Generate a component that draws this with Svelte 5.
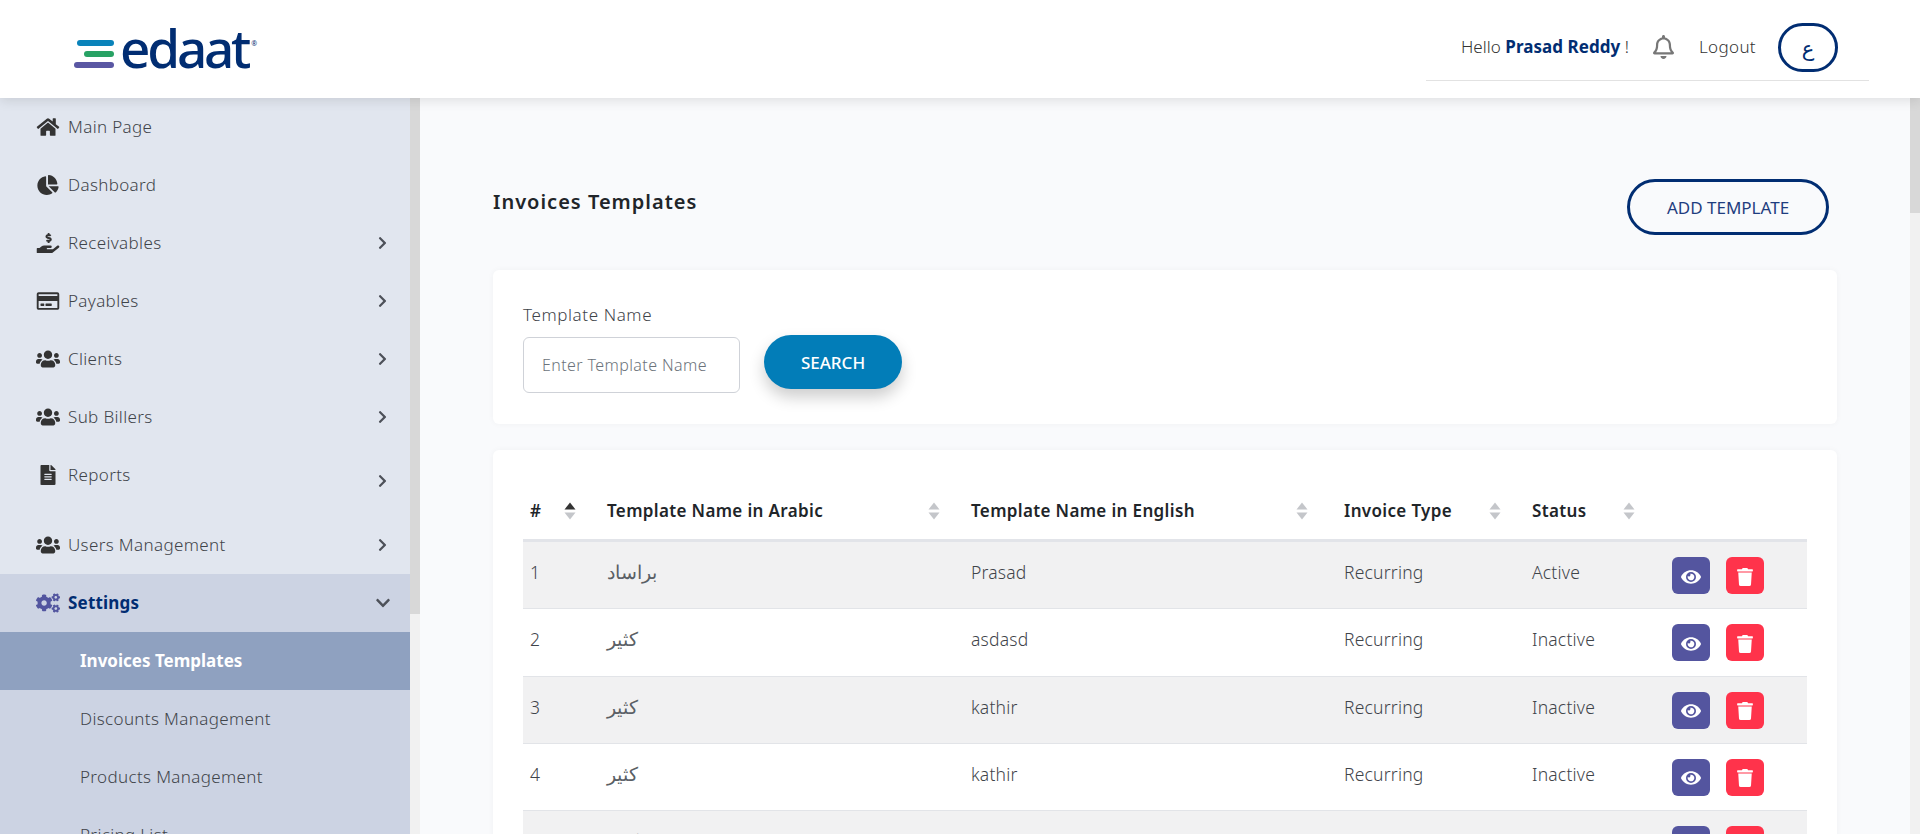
<script>
  const icons = {
    home: ['0 0 576 512', 'M280.37 148.26L96 300.11V464a16 16 0 0 0 16 16l112.06-.29a16 16 0 0 0 15.92-16V368a16 16 0 0 1 16-16h64a16 16 0 0 1 16 16v95.64a16 16 0 0 0 16 16.05L464 480a16 16 0 0 0 16-16V300L295.67 148.26a12.19 12.19 0 0 0-15.3 0zM571.6 251.47L488 182.56V44.05a12 12 0 0 0-12-12h-56a12 12 0 0 0-12 12v72.61L318.47 43a48 48 0 0 0-61 0L4.34 251.47a12 12 0 0 0-1.6 16.9l25.5 31A12 12 0 0 0 45.15 301l235.22-193.74a12.19 12.19 0 0 1 15.3 0L530.9 301a12 12 0 0 0 16.9-1.6l25.5-31a12 12 0 0 0-1.7-16.93z'],
    pie: ['0 0 544 512', 'M527.79 288H290.5l158.03 158.03c6.04 6.04 15.98 6.53 22.19.68 38.7-36.46 65.32-85.61 73.13-140.86 1.34-9.46-6.51-17.85-16.06-17.85zm-15.83-64.8C503.72 103.74 408.26 8.28 288.8.04 279.68-.59 272 7.1 272 16.24V240h223.77c9.14 0 16.82-7.68 16.19-16.8zM224 288V50.71c0-9.55-8.39-17.4-17.84-16.06C86.99 51.49-4.1 155.6.14 280.37 4.5 408.51 114.83 513.59 243.03 511.98c50.4-.63 96.97-16.87 135.26-44.03 7.9-5.6 8.42-17.23 1.57-24.08L224 288z'],
    hand: ['0 0 576 512', 'M271.06,144.3l54.27,14.3a8.59,8.59,0,0,1,6.63,8.1c0,4.6-4.09,8.4-9.12,8.4h-35.6a30,30,0,0,1-11.19-2.2c-5.24-2.2-11.28-1.7-15.3,2l-19,17.5a11.68,11.68,0,0,0-2.25,2.66,11.42,11.42,0,0,0,3.88,15.74,83.77,83.77,0,0,0,34.51,11.5V240c0,8.8,7.83,16,17.37,16h17.37c9.55,0,17.38-7.2,17.38-16V222.4c32.93-3.6,57.84-31,53.5-63-3.15-23-22.46-41.3-46.56-47.7L282.68,97.4a8.59,8.59,0,0,1-6.63-8.1c0-4.6,4.09-8.4,9.12-8.4h35.6A30,30,0,0,1,332,83.1c5.23,2.2,11.28,1.7,15.3-2l19-17.5A11.31,11.31,0,0,0,368.47,61a11.43,11.43,0,0,0-3.84-15.78,83.82,83.82,0,0,0-34.52-11.5V16c0-8.8-7.82-16-17.37-16H295.37C285.82,0,278,7.2,278,16V33.6c-32.89,3.6-57.85,31-53.51,63C227.63,119.6,247,137.9,271.06,144.3ZM565.27,328.1c-11.8-10.7-30.2-10-42.6,0L430.27,402a63.64,63.64,0,0,1-40,14H272a16,16,0,0,1,0-32h78.29c15.9,0,30.71-10.9,33.25-26.6a31.2,31.2,0,0,0,.46-5.46A32,32,0,0,0,352,320H192a117.66,117.66,0,0,0-74.1,26.29L71.4,384H16A16,16,0,0,0,0,400v96a16,16,0,0,0,16,16H372.77a64,64,0,0,0,40-14L564,377a32,32,0,0,0,1.28-48.9Z'],
    card: ['0 0 576 512', 'M527.9 32H48.1C21.5 32 0 53.5 0 80v352c0 26.5 21.5 48 48.1 48h479.8c26.6 0 48.1-21.5 48.1-48V80c0-26.5-21.5-48-48.1-48zM54.1 80h467.8c3.3 0 6 2.7 6 6v42H48.1V86c0-3.3 2.7-6 6-6zm467.8 352H54.1c-3.3 0-6-2.7-6-6V256h479.8v170c0 3.3-2.7 6-6 6zM192 332v40c0 6.6-5.4 12-12 12h-72c-6.6 0-12-5.4-12-12v-40c0-6.6 5.4-12 12-12h72c6.6 0 12 5.4 12 12zm192 0v40c0 6.6-5.4 12-12 12H236c-6.6 0-12-5.4-12-12v-40c0-6.6 5.4-12 12-12h136c6.6 0 12 5.4 12 12z'],
    users: ['0 0 640 512', 'M96 224c35.3 0 64-28.7 64-64s-28.7-64-64-64-64 28.7-64 64 28.7 64 64 64zm448 0c35.3 0 64-28.7 64-64s-28.7-64-64-64-64 28.7-64 64 28.7 64 64 64zm32 32h-64c-17.6 0-33.5 7.1-45.1 18.6 40.3 22.1 68.9 62 75.1 109.4h66c17.7 0 32-14.3 32-32v-32c0-35.3-28.7-64-64-64zm-256 0c61.9 0 112-50.1 112-112S381.9 32 320 32 208 82.1 208 144s50.1 112 112 112zm76.8 32h-8.3c-20.8 10-43.9 16-68.5 16s-47.6-6-68.5-16h-8.3C179.6 288 128 339.6 128 403.2V432c0 26.5 21.5 48 48 48h288c26.5 0 48-21.5 48-48v-28.8c0-63.6-51.6-115.2-115.2-115.2zm-223.7-13.4C161.5 263.1 145.6 256 128 256H64c-35.3 0-64 28.7-64 64v32c0 17.7 14.3 32 32 32h65.9c6.3-47.4 34.9-87.3 75.2-109.4z'],
    file: ['0 0 384 512', 'M224 136V0H24C10.7 0 0 10.7 0 24v464c0 13.3 10.7 24 24 24h336c13.3 0 24-10.7 24-24V160H248c-13.2 0-24-10.8-24-24zm64 236c0 6.6-5.4 12-12 12H108c-6.6 0-12-5.4-12-12v-8c0-6.6 5.4-12 12-12h168c6.6 0 12 5.4 12 12v8zm0-64c0 6.6-5.4 12-12 12H108c-6.6 0-12-5.4-12-12v-8c0-6.6 5.4-12 12-12h168c6.6 0 12 5.4 12 12v8zm0-72v8c0 6.6-5.4 12-12 12H108c-6.6 0-12-5.4-12-12v-8c0-6.6 5.4-12 12-12h168c6.6 0 12 5.4 12 12zm96-114.1v6.1H256V0h6.1c6.4 0 12.5 2.5 17 7l97.9 98c4.5 4.5 7 10.6 7 16.9z'],
    cogs: ['0 0 640 512', 'M512.1 191l-8.2 14.3c-3 5.3-9.4 7.5-15.1 5.4-11.8-4.4-22.6-10.7-32.1-18.6-4.6-3.8-5.8-10.5-2.8-15.7l8.2-14.3c-6.9-8-12.3-17.3-15.9-27.4h-16.5c-6 0-11.2-4.3-12.2-10.3-2-12-2.1-24.6 0-37.1 1-6 6.2-10.4 12.2-10.4h16.5c3.6-10.1 9-19.4 15.9-27.4l-8.2-14.3c-3-5.2-1.9-11.9 2.8-15.7 9.5-7.9 20.4-14.2 32.1-18.6 5.7-2.1 12.1.1 15.1 5.4l8.2 14.3c10.5-1.9 21.2-1.9 31.7 0L552 6.3c3-5.3 9.4-7.5 15.1-5.4 11.8 4.4 22.6 10.7 32.1 18.6 4.6 3.8 5.8 10.5 2.8 15.7l-8.2 14.3c6.9 8 12.3 17.3 15.9 27.4h16.5c6 0 11.2 4.3 12.2 10.3 2 12 2.1 24.6 0 37.1-1 6-6.2 10.4-12.2 10.4h-16.5c-3.6 10.1-9 19.4-15.9 27.4l8.2 14.3c3 5.2 1.9 11.9-2.8 15.7-9.5 7.9-20.4 14.2-32.1 18.6-5.7 2.1-12.1-.1-15.1-5.4l-8.2-14.3c-10.4 1.9-21.2 1.9-31.7 0zm-10.5-58.8c38.5 29.6 82.4-14.3 52.8-52.8-38.5-29.7-82.4 14.3-52.8 52.8zM386.3 286.1l33.7 16.8c10.1 5.8 14.5 18.1 10.5 29.1-8.9 24.2-26.4 46.4-42.6 65.8-7.4 8.9-20.2 11.1-30.3 5.3l-29.1-16.8c-16 13.7-34.6 24.6-54.9 31.7v33.6c0 11.6-8.3 21.6-19.7 23.6-24.6 4.2-50.4 4.4-75.9 0-11.5-2-20-11.9-20-23.6V418c-20.3-7.2-38.9-18-54.9-31.7L74 403c-10 5.8-22.9 3.6-30.3-5.3-16.2-19.4-33.3-41.6-42.2-65.7-4-10.9.4-23.2 10.5-29.1l33.3-16.8c-3.9-20.9-3.9-42.4 0-63.4L12 205.8c-10.1-5.8-14.6-18.1-10.5-29 8.9-24.2 26-46.4 42.2-65.8 7.4-8.9 20.2-11.1 30.3-5.3l29.1 16.8c16-13.7 34.6-24.6 54.9-31.7V57.1c0-11.5 8.2-21.5 19.6-23.5 24.6-4.2 50.5-4.4 76-.1 11.5 2 20 11.9 20 23.6v33.6c20.3 7.2 38.9 18 54.9 31.7l29.1-16.8c10-5.8 22.9-3.6 30.3 5.3 16.2 19.4 33.2 41.6 42.1 65.8 4 10.9.1 23.2-10 29.1l-33.7 16.8c3.9 21 3.9 42.5 0 63.5zm-117.6 21.1c59.2-77-28.7-164.9-105.7-105.7-59.2 77 28.7 164.9 105.7 105.7zm243.4 182.7l-8.2 14.3c-3 5.3-9.4 7.5-15.1 5.4-11.8-4.4-22.6-10.7-32.1-18.6-4.6-3.8-5.8-10.5-2.8-15.7l8.2-14.3c-6.9-8-12.3-17.3-15.9-27.4h-16.5c-6 0-11.2-4.3-12.2-10.3-2-12-2.1-24.6 0-37.1 1-6 6.2-10.4 12.2-10.4h16.5c3.6-10.1 9-19.4 15.9-27.4l-8.2-14.3c-3-5.2-1.9-11.9 2.8-15.7 9.5-7.9 20.4-14.2 32.1-18.6 5.7-2.1 12.1.1 15.1 5.4l8.2 14.3c10.5-1.9 21.2-1.9 31.7 0l8.2-14.3c3-5.3 9.4-7.5 15.1-5.4 11.8 4.4 22.6 10.7 32.1 18.6 4.6 3.8 5.8 10.5 2.8 15.7l-8.2 14.3c6.9 8 12.3 17.3 15.9 27.4h16.5c6 0 11.2 4.3 12.2 10.3 2 12 2.1 24.6 0 37.1-1 6-6.2 10.4-12.2 10.4h-16.5c-3.6 10.1-9 19.4-15.9 27.4l8.2 14.3c3 5.2 1.9 11.9-2.8 15.7-9.5 7.9-20.4 14.2-32.1 18.6-5.7 2.1-12.1-.1-15.1-5.4l-8.2-14.3c-10.4 1.9-21.2 1.9-31.7 0zM501.6 431c38.5 29.6 82.4-14.3 52.8-52.8-38.5-29.6-82.4 14.3-52.8 52.8z']
  };
  const right = 'M285.476 272.971L91.132 467.314c-9.373 9.373-24.569 9.373-33.941 0l-22.667-22.667c-9.357-9.357-9.375-24.522-.04-33.901L188.505 256 34.484 101.255c-9.335-9.379-9.317-24.544.04-33.901l22.667-22.667c9.373-9.373 24.569-9.373 33.941 0L285.475 239.03c9.373 9.372 9.373 24.568.001 33.941z';
  const down = 'M207.029 381.476L12.686 187.132c-9.373-9.373-9.373-24.569 0-33.941l22.667-22.667c9.357-9.357 24.522-9.375 33.901-.04L224 284.505l154.745-154.021c9.379-9.335 24.544-9.317 33.901.04l22.667 22.667c9.373 9.373 9.373 24.569 0 33.941L240.971 381.476c-9.373 9.372-24.569 9.372-33.942 0z';
  const eye = 'M572.52 241.4C518.29 135.59 410.93 64 288 64S57.68 135.64 3.48 241.41a32.35 32.35 0 0 0 0 29.19C57.71 376.41 165.07 448 288 448s230.32-71.64 284.52-177.41a32.35 32.35 0 0 0 0-29.19zM288 400a144 144 0 1 1 144-144 143.93 143.93 0 0 1-144 144zm0-240a95.31 95.31 0 0 0-25.31 3.79 47.85 47.85 0 0 1-66.9 66.9A95.78 95.78 0 1 0 288 160z';
  const trash = 'M432 32H312l-9.4-18.7A24 24 0 0 0 281.1 0H166.8a23.72 23.72 0 0 0-21.4 13.3L136 32H16A16 16 0 0 0 0 48v32a16 16 0 0 0 16 16h416a16 16 0 0 0 16-16V48a16 16 0 0 0-16-16zM53.2 467a48 48 0 0 0 47.9 45h245.8a48 48 0 0 0 47.9-45L416 128H32z';
  const bell = 'M439.39 362.29c-19.32-20.76-55.47-51.99-55.47-154.29 0-77.7-54.48-139.9-127.94-155.16V32c0-17.67-14.32-32-31.98-32s-31.98 14.33-31.98 32v20.84C118.56 68.1 64.08 130.3 64.08 208c0 102.3-36.15 133.53-55.47 154.29-6 6.45-8.66 14.16-8.61 21.71.11 16.4 12.98 32 32.1 32h383.8c19.12 0 32-15.6 32.1-32 .05-7.55-2.61-15.27-8.61-21.71zM67.53 368c21.22-27.97 44.42-74.33 44.53-159.42 0-.2-.06-.38-.06-.58 0-61.86 50.14-112 112-112s112 50.14 112 112c0 .2-.06.38-.06.58.11 85.1 23.31 131.46 44.53 159.42H67.53zM224 512c35.32 0 63.97-28.65 63.97-64H160.03c0 35.35 28.65 64 63.97 64z';

  const menu = [
    { label: 'Main Page', icon: 'home' },
    { label: 'Dashboard', icon: 'pie' },
    { label: 'Receivables', icon: 'hand', more: true },
    { label: 'Payables', icon: 'card', more: true },
    { label: 'Clients', icon: 'users', more: true },
    { label: 'Sub Billers', icon: 'users', more: true },
    { label: 'Reports', icon: 'file', more: true, tall: true },
    { label: 'Users Management', icon: 'users', more: true }
  ];
  const submenu = ['Invoices Templates', 'Discounts Management', 'Products Management', 'Pricing List'];

  const columns = ['#', 'Template Name in Arabic', 'Template Name in English', 'Invoice Type', 'Status'];
  const rows = [
    [1, 'براساد', 'Prasad', 'Recurring', 'Active'],
    [2, 'كثير', 'asdasd', 'Recurring', 'Inactive'],
    [3, 'كثير', 'kathir', 'Recurring', 'Inactive'],
    [4, 'كثير', 'kathir', 'Recurring', 'Inactive'],
    [5, 'كثير', 'kathir', 'Recurring', 'Inactive']
  ];
</script>

<div class="page">
  <header class="topbar">
    <div class="logo">
      <span class="bars">
        <i class="bar blue"></i>
        <i class="bar green"></i>
        <i class="bar purple"></i>
      </span>
      <span class="wordmark">edaat</span>
      <span class="reg">®</span>
    </div>
    <div class="user">
      <span class="hello">Hello <b>Prasad Reddy</b> !</span>
      <svg class="bell" viewBox="0 0 448 512"><path d={bell} /></svg>
      <span class="logout">Logout</span>
      <button class="lang">ع</button>
    </div>
  </header>

  <div class="body">
    <aside class="sidebar">
      {#each menu as item}
        <div class="item" class:tall={item.tall}>
          <span class="icon"><svg viewBox={icons[item.icon][0]}><path d={icons[item.icon][1]} /></svg></span>
          <span class="label">{item.label}</span>
          {#if item.more}
            <svg class="chev" class:low={item.tall} viewBox="0 0 320 512"><path d={right} /></svg>
          {/if}
        </div>
      {/each}
      <div class="group">
        <div class="item open">
          <span class="icon"><svg viewBox={icons.cogs[0]}><path d={icons.cogs[1]} /></svg></span>
          <span class="label">Settings</span>
          <svg class="chev wide" viewBox="0 0 448 512"><path d={down} /></svg>
        </div>
        {#each submenu as sub, i}
          <div class="sub" class:current={i === 0}>{sub}</div>
        {/each}
      </div>
    </aside>
    <div class="scroll"><div class="thumb side-thumb"></div></div>

    <main class="main">
      <div class="title-row">
        <h1>Invoices Templates</h1>
        <button class="add">ADD TEMPLATE</button>
      </div>

      <section class="card search-card">
        <div class="field">
          <label for="tpl">Template Name</label>
          <input id="tpl" placeholder="Enter Template Name" />
        </div>
        <button class="search">SEARCH</button>
      </section>

      <section class="card table-card">
        <table>
          <colgroup>
            <col style="width:77px" /><col style="width:364px" /><col style="width:373px" /><col style="width:188px" /><col style="width:139px" /><col />
          </colgroup>
          <thead>
            <tr>
              {#each columns as col, i}
                <th>
                  <div class="head" class:wide-gap={i === 2 || i === 4}>
                    <span>{col}</span>
                    <svg class="sort" class:asc={i === 0} viewBox="0 0 12 18">
                      <path class="up" d="M6 0.5 L11.5 7.5 H0.5 Z" />
                      <path class="dn" d="M0.5 10.5 H11.5 L6 17.5 Z" />
                    </svg>
                  </div>
                </th>
              {/each}
              <th></th>
            </tr>
          </thead>
          <tbody>
            {#each rows as row}
              <tr>
                {#each row as cell, c}
                  <td class:arabic={c === 1}>{cell}</td>
                {/each}
                <td class="actions">
                  <div class="btns">
                    <button class="act view"><svg viewBox="0 0 576 512"><path d={eye} /></svg></button>
                    <button class="act del"><svg viewBox="0 0 448 512"><path d={trash} /></svg></button>
                  </div>
                </td>
              </tr>
            {/each}
          </tbody>
        </table>
      </section>
    </main>
    <div class="scroll"><div class="thumb main-thumb"></div></div>
  </div>
</div>

<style>
  :global(body) {
    margin: 0;
    background: #f9fafc;
  }

  .page {
    height: 834px;
    overflow: hidden;
    display: flex;
    flex-direction: column;
    font-family: "Noto Sans", "DejaVu Sans", sans-serif;
    font-size: 17px;
    font-weight: 300;
    line-height: 24px;
    letter-spacing: 0.35px;
    color: #3f444a;
  }

  /* top bar */
  .topbar {
    height: 98px;
    flex: none;
    background: #fff;
    display: flex;
    justify-content: space-between;
    align-items: flex-start;
    box-shadow: 0 2px 12px rgba(0, 0, 0, 0.12);
    position: relative;
    z-index: 2;
  }

  .logo {
    display: flex;
    align-items: flex-start;
    padding: 22px 0 0 74px;
  }

  .bars {
    display: flex;
    flex-direction: column;
    align-items: flex-end;
    gap: 5px;
    width: 40px;
    padding-top: 18px;
    margin-right: 6px;
  }

  .bar {
    display: block;
    height: 6px;
    border-radius: 3px;
  }

  .blue { width: 37px; background: #0a83ba; }
  .green { width: 30px; background: #28a264; }
  .purple { width: 40px; background: #5a57a3; }

  .wordmark {
    font-family: "Noto Sans", sans-serif;
    font-weight: 500;
    font-size: 53px;
    line-height: 52px;
    letter-spacing: -3.2px;
    color: #012d72;
  }

  .reg {
    font-size: 7px;
    line-height: 7px;
    font-weight: 400;
    color: #012d72;
    margin: 18px 0 0 3px;
  }

  .user {
    width: 443px;
    height: 81px;
    box-sizing: border-box;
    margin-right: 51px;
    padding: 23px 31px 9px 0;
    border-bottom: 1px solid #e2e2e2;
    display: flex;
    justify-content: flex-end;
    align-items: center;
    color: #333;
  }

  .hello { letter-spacing: 0.05px; }

  .hello b {
    color: #012d72;
    font-weight: 700;
  }

  .bell {
    width: 21px;
    height: 24px;
    fill: #777;
    margin: 0 25px 0 24px;
  }

  .logout {
    margin-right: 22px;
  }

  .lang {
    width: 60px;
    height: 49px;
    box-sizing: border-box;
    border: 3px solid #012d72;
    border-radius: 25px;
    background: #fff;
    color: #012d72;
    font: 400 21px/1 "DejaVu Sans", sans-serif;
    padding: 5px 0 0;
  }

  /* body */
  .body {
    flex: 1;
    min-height: 0;
    display: flex;
  }

  .sidebar {
    width: 410px;
    flex: none;
    background: #e1e6ef;
    overflow: hidden;
  }

  .scroll {
    width: 10px;
    flex: none;
    background: #f1f1f1;
  }

  .thumb { background: #d8d8d8; }
  .side-thumb { height: 516px; }
  .main-thumb { height: 115px; }

  .item {
    height: 58px;
    box-sizing: border-box;
    display: flex;
    align-items: center;
    padding: 0 23px 0 36px;
  }

  .item.tall {
    height: 70px;
    padding-bottom: 12px;
  }

  .icon {
    width: 32px;
    display: flex;
    justify-content: flex-start;
    flex: none;
  }

  .icon svg {
    height: 20px;
    width: 24px;
    fill: #333;
  }

  .label { flex: 1; }

  .chev {
    width: 9px;
    height: 14px;
    fill: #4d5159;
  }

  .chev.low {
    position: relative;
    top: 6px;
  }

  .chev.wide {
    width: 14px;
    height: 16px;
    margin-right: -3px;
  }

  .group { background: #ccd3e3; }

  .open .label {
    color: #012d72;
    font-weight: 700;
    letter-spacing: 0.2px;
  }

  .open .icon svg { fill: #52559f; }

  .sub {
    height: 58px;
    display: flex;
    align-items: center;
    padding-left: 80px;
  }

  .sub.current {
    background: #8fa1c0;
    color: #fff;
    font-weight: 700;
    letter-spacing: 0;
  }

  /* main */
  .main {
    flex: 1;
    min-width: 0;
    padding: 81px 73px 0 73px;
    overflow: hidden;
  }

  .title-row {
    display: flex;
    justify-content: space-between;
    align-items: flex-start;
    margin-bottom: 35px;
  }

  h1 {
    margin: 8px 0 0;
    font-size: 20px;
    line-height: 30px;
    font-weight: 600;
    letter-spacing: 1px;
    color: #212529;
  }

  .add {
    width: 202px;
    height: 56px;
    margin-right: 8px;
    border: 3px solid #012d72;
    border-radius: 28px;
    background: transparent;
    color: #1f3d7f;
    font: 400 17px "Noto Sans", sans-serif;
  }

  .card {
    background: #fff;
    border-radius: 6px;
    box-shadow: 0 0 6px rgba(0, 0, 0, 0.04);
  }

  .search-card {
    height: 154px;
    box-sizing: border-box;
    margin-bottom: 26px;
    padding: 33px 30px 0 30px;
    display: flex;
    align-items: flex-start;
  }

  .field {
    width: 217px;
    margin-right: 24px;
  }

  label {
    display: block;
    margin-bottom: 10px;
    letter-spacing: 0.6px;
  }

  input {
    display: block;
    width: 100%;
    height: 56px;
    box-sizing: border-box;
    padding: 0 18px;
    border: 1px solid #cfd2d8;
    border-radius: 6px;
    font: 300 16px "Noto Sans", sans-serif;
    letter-spacing: 0.4px;
    outline: none;
  }

  input::placeholder { color: #6c737b; }

  .search {
    width: 138px;
    height: 54px;
    margin-top: 32px;
    border: 0;
    border-radius: 27px;
    background: #027db8;
    color: #fff;
    font: 500 17px "Noto Sans", sans-serif;
    box-shadow: 0 8px 16px rgba(0, 0, 0, 0.2);
  }

  .table-card {
    padding: 30px 30px 0 30px;
    height: 420px;
  }

  table {
    width: 100%;
    table-layout: fixed;
    border-collapse: separate;
    border-spacing: 0;
  }

  th {
    padding: 19px 0 16px 7px;
    border-bottom: 3px solid #e2e4e9;
    text-align: left;
    color: #212529;
    font-weight: 600;
  }

  .head {
    display: flex;
    justify-content: space-between;
    align-items: center;
    padding-right: 24px;
  }

  .head.wide-gap { padding-right: 29px; }

  .sort {
    width: 12px;
    height: 18px;
    fill: #c4c6ca;
  }

  .sort.asc .up { fill: #333; }

  td {
    padding: 18px 0 0 7px;
    height: 48px;
    border-bottom: 1px solid #e2e4e8;
    vertical-align: top;
    font-size: 17.5px;
    letter-spacing: 0.2px;
  }

  td.arabic {
    font-family: "DejaVu Sans", sans-serif;
    font-size: 19px;
    letter-spacing: 0;
    color: #5a5f65;
  }

  tbody tr:nth-child(odd) td { background: #f1f1f2; }

  td.actions { padding-top: 15px; height: 51.33px; }

  .btns {
    display: flex;
    gap: 16px;
    margin-left: 1px;
  }

  .act {
    width: 38px;
    height: 37px;
    border: 0;
    border-radius: 6px;
    padding: 2px 0 0;
    display: flex;
    align-items: center;
    justify-content: center;
  }

  .act svg {
    fill: #fff;
  }

  .view { background: #54559f; }
  .view svg { width: 20px; height: 18px; }
  .del { background: #ff334b; }
  .del svg { width: 16px; height: 18px; }
</style>
